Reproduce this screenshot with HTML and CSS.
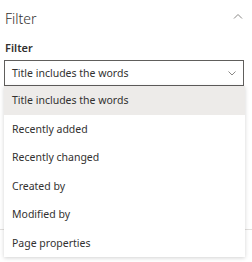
FILE: index.html
```html
<!DOCTYPE html>
<html lang="en">
<head>
    <meta charset="UTF-8">
    <meta name="viewport" content="width=device-width, initial-scale=1.0">
    <title>Filter</title>
    <link rel="stylesheet" href="styles.css">
</head>
<body>

    <div class="panel">
        <div class="panel-header">
            <span class="panel-title">Filter</span>
            <svg class="chevron-up" width="10" height="6" viewBox="0 0 10 6">
                <path d="M1 5.5 L5 1.5 L9 5.5" fill="none" stroke="#8a8886" stroke-width="1"/>
            </svg>
        </div>

        <div class="field">
            <div class="field-label">Filter</div>
            <div class="dropdown">
                <span class="dropdown-value">Title includes the words</span>
                <svg class="chevron-down" width="8" height="5" viewBox="0 0 8 5">
                    <path d="M0.5 0.5 L4 4 L7.5 0.5" fill="none" stroke="#8a8886" stroke-width="1"/>
                </svg>

                <!-- Lista abierta del desplegable -->
                <ul class="dropdown-list">
                    <li class="dropdown-item selected">Title includes the words</li>
                    <li class="dropdown-item">Recently added</li>
                    <li class="dropdown-item">Recently changed</li>
                    <li class="dropdown-item">Created by</li>
                    <li class="dropdown-item">Modified by</li>
                    <li class="dropdown-item">Page properties</li>
                </ul>
            </div>
        </div>

        <div class="divider"></div>
    </div>

</body>
</html>
```

FILE: styles.css
```css
html, body {
    height: 100%;
}

body {
    font-family: 'Noto Sans', 'Open Sans', sans-serif;
    background-color: #fff;
    color: #323130;
    margin: 0;
    padding: 0;
}

.panel {
    min-height: 100%;
    padding: 0 0 0 4px;
}

.panel-header {
    display: flex;
    align-items: center;
    justify-content: space-between;
    height: 36px;
    padding-right: 9px;
}

.panel-title {
    font-size: 14px;
    font-weight: 300;
    padding-left: 1px;
}

.chevron-up {
    margin-top: -5px;
}

.field {
    padding-right: 8px;
}

.field-label {
    font-size: 11px;
    font-weight: 600;
    line-height: 16px;
    margin: 4px 0 4px 1px;
}

.dropdown {
    position: relative;
    display: flex;
    align-items: center;
    justify-content: space-between;
    height: 24px;
    border: 1px solid #605e5c;
    padding: 0 7px 0 7px;
    font-size: 10.5px;
}

.dropdown-list {
    list-style: none;
    margin: 0;
    padding: 0;
    position: absolute;
    top: calc(100% + 1px);
    left: -1px;
    right: -2px;
    background-color: #fff;
    box-shadow: 0 1px 4px rgba(0, 0, 0, 0.18);
    z-index: 10;
}

.dropdown-item {
    height: 28.5px;
    line-height: 28.5px;
    padding-left: 8px;
    font-size: 10.5px;
}

.dropdown-item.selected {
    background-color: #edebe9;
}

.divider {
    margin: 143px 0 0 -4px;
    height: 1px;
    background-color: #e1dfdd;
}
```
